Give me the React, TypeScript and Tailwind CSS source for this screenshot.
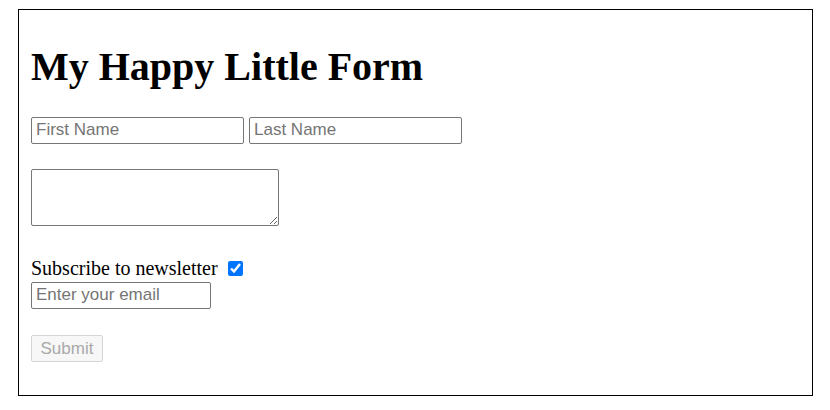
export default function App() {
  return (
    <div className="bg-white w-[830px] h-[410px] pt-[9px] pl-[18px] font-['Liberation_Serif',serif] text-black">
      <form
        className="w-[795px] h-[387px] border border-black pt-[34px] px-[12px] flex flex-col items-start"
        onSubmit={(e) => e.preventDefault()}
      >
        <h1 className="text-[40px] leading-[46px] font-bold">My Happy Little Form</h1>

        <div className="mt-[27px] flex gap-[5px]">
          <input
            type="text"
            placeholder="First Name"
            className="w-[213px] h-[27px] border border-[#767676] rounded-[2px] px-[4px] pb-[1px] font-['Liberation_Sans',sans-serif] text-[17px] placeholder:text-[#757575]"
          />
          <input
            type="text"
            placeholder="Last Name"
            className="w-[213px] h-[27px] border border-[#767676] rounded-[2px] px-[4px] pb-[1px] font-['Liberation_Sans',sans-serif] text-[17px] placeholder:text-[#757575]"
          />
        </div>

        <textarea className="mt-[25px] w-[248px] h-[57px] border border-[#767676] rounded-[2px] px-[3px] font-['Liberation_Sans',sans-serif] text-[17px]" />

        <label className="mt-[31px] flex items-center h-[23px] text-[20px] leading-[23px]">
          Subscribe to newsletter
          <input type="checkbox" defaultChecked className="ml-[10px] w-[15px] h-[15px] accent-[#0075ff]" />
        </label>

        <input
          type="email"
          placeholder="Enter your email"
          className="mt-[2px] w-[180px] h-[27px] border border-[#767676] rounded-[2px] px-[4px] pb-[1px] font-['Liberation_Sans',sans-serif] text-[17px] placeholder:text-[#757575]"
        />

        <button
          type="submit"
          disabled
          className="mt-[26px] w-[72px] h-[27px] border border-[#d5d5d5] rounded-[2px] bg-[#f7f7f7] text-[#a9a9a9] font-['Liberation_Sans',sans-serif] text-[17px] leading-[20px]"
        >
          Submit
        </button>
      </form>
    </div>
  )
}
